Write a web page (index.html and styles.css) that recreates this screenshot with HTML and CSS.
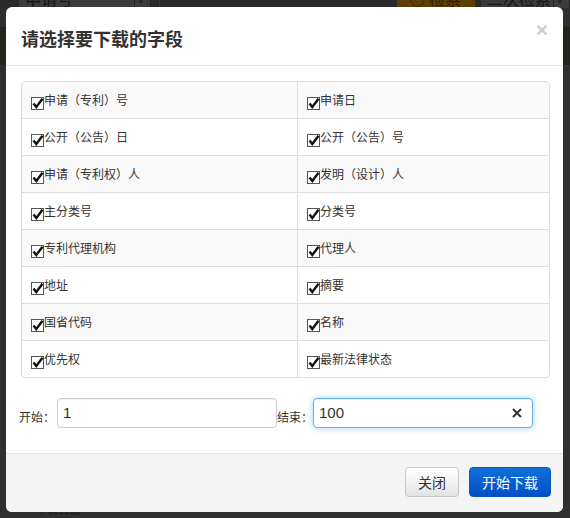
FILE: index.html
```html
<!DOCTYPE html>
<html lang="zh-CN">
<head>
<meta charset="utf-8">
<title>下载字段</title>
<link rel="stylesheet" href="styles.css">
</head>
<body>
<div class="page">
  <div class="topbar">
    <div class="sel">申请号<span class="arrow">✓</span></div>
    <div class="search-input"></div>
    <div class="search-btn">○ 检索</div>
    <div class="sel sel2">二次检索<span class="arrow">✓</span></div>
  </div>
  <div class="band"></div>
  <div class="content"><span class="frag">申请日期</span></div>
</div>

<div class="modal">
  <div class="modal-header">
    <h4 class="modal-title">请选择要下载的字段</h4>
    <span class="close">×</span>
  </div>
  <div class="modal-body">
    <div class="fields">
      <div class="cell odd"><span class="cb"><svg viewBox="0 0 13 13" width="13" height="13"><path d="M2.5 6.5 L5.3 10 L11.5 1.8" fill="none" stroke="#111" stroke-width="2.4" stroke-linejoin="miter"/></svg></span>申请（专利）号</div>
      <div class="cell odd right"><span class="cb"><svg viewBox="0 0 13 13" width="13" height="13"><path d="M2.5 6.5 L5.3 10 L11.5 1.8" fill="none" stroke="#111" stroke-width="2.4"/></svg></span>申请日</div>
      <div class="cell"><span class="cb"><svg viewBox="0 0 13 13" width="13" height="13"><path d="M2.5 6.5 L5.3 10 L11.5 1.8" fill="none" stroke="#111" stroke-width="2.4"/></svg></span>公开（公告）日</div>
      <div class="cell right"><span class="cb"><svg viewBox="0 0 13 13" width="13" height="13"><path d="M2.5 6.5 L5.3 10 L11.5 1.8" fill="none" stroke="#111" stroke-width="2.4"/></svg></span>公开（公告）号</div>
      <div class="cell odd"><span class="cb"><svg viewBox="0 0 13 13" width="13" height="13"><path d="M2.5 6.5 L5.3 10 L11.5 1.8" fill="none" stroke="#111" stroke-width="2.4"/></svg></span>申请（专利权）人</div>
      <div class="cell odd right"><span class="cb"><svg viewBox="0 0 13 13" width="13" height="13"><path d="M2.5 6.5 L5.3 10 L11.5 1.8" fill="none" stroke="#111" stroke-width="2.4"/></svg></span>发明（设计）人</div>
      <div class="cell"><span class="cb"><svg viewBox="0 0 13 13" width="13" height="13"><path d="M2.5 6.5 L5.3 10 L11.5 1.8" fill="none" stroke="#111" stroke-width="2.4"/></svg></span>主分类号</div>
      <div class="cell right"><span class="cb"><svg viewBox="0 0 13 13" width="13" height="13"><path d="M2.5 6.5 L5.3 10 L11.5 1.8" fill="none" stroke="#111" stroke-width="2.4"/></svg></span>分类号</div>
      <div class="cell odd"><span class="cb"><svg viewBox="0 0 13 13" width="13" height="13"><path d="M2.5 6.5 L5.3 10 L11.5 1.8" fill="none" stroke="#111" stroke-width="2.4"/></svg></span>专利代理机构</div>
      <div class="cell odd right"><span class="cb"><svg viewBox="0 0 13 13" width="13" height="13"><path d="M2.5 6.5 L5.3 10 L11.5 1.8" fill="none" stroke="#111" stroke-width="2.4"/></svg></span>代理人</div>
      <div class="cell"><span class="cb"><svg viewBox="0 0 13 13" width="13" height="13"><path d="M2.5 6.5 L5.3 10 L11.5 1.8" fill="none" stroke="#111" stroke-width="2.4"/></svg></span>地址</div>
      <div class="cell right"><span class="cb"><svg viewBox="0 0 13 13" width="13" height="13"><path d="M2.5 6.5 L5.3 10 L11.5 1.8" fill="none" stroke="#111" stroke-width="2.4"/></svg></span>摘要</div>
      <div class="cell odd"><span class="cb"><svg viewBox="0 0 13 13" width="13" height="13"><path d="M2.5 6.5 L5.3 10 L11.5 1.8" fill="none" stroke="#111" stroke-width="2.4"/></svg></span>国省代码</div>
      <div class="cell odd right"><span class="cb"><svg viewBox="0 0 13 13" width="13" height="13"><path d="M2.5 6.5 L5.3 10 L11.5 1.8" fill="none" stroke="#111" stroke-width="2.4"/></svg></span>名称</div>
      <div class="cell"><span class="cb"><svg viewBox="0 0 13 13" width="13" height="13"><path d="M2.5 6.5 L5.3 10 L11.5 1.8" fill="none" stroke="#111" stroke-width="2.4"/></svg></span>优先权</div>
      <div class="cell right"><span class="cb"><svg viewBox="0 0 13 13" width="13" height="13"><path d="M2.5 6.5 L5.3 10 L11.5 1.8" fill="none" stroke="#111" stroke-width="2.4"/></svg></span>最新法律状态</div>
    </div>
    <div class="range">
      <span class="lbl">开始：</span>
      <div class="inp">1</div>
      <span class="lbl">结束：</span>
      <div class="inp focus">100<span class="clear"><svg viewBox="0 0 10 10" width="10" height="10"><path d="M1 1 L9 9 M9 1 L1 9" stroke="#333" stroke-width="2"/></svg></span></div>
    </div>
  </div>
  <div class="modal-footer">
    <button class="btn btn-default">关闭</button>
    <button class="btn btn-primary">开始下载</button>
  </div>
</div>
</body>
</html>
```

FILE: styles.css
```css
* { box-sizing: border-box; }
html, body { margin: 0; padding: 0; }
body {
  width: 570px;
  height: 518px;
  overflow: hidden;
  background: #2e2e2e;
  font-family: "Noto Sans CJK SC", "Liberation Sans", sans-serif;
  position: relative;
}
.page { height: 518px; }
.topbar {
  display: flex;
  height: 20px;
  margin-top: -12px;
  background: #2a2a2a;
  font-size: 16px;
  color: #161616;
}
.sel {
  margin-left: 19px;
  width: 133px;
  background: #3b3b3b;
  padding-left: 6px;
  line-height: 20px;
  position: relative;
  display: flex;
  justify-content: space-between;
}
.sel .arrow {
  width: 17px;
  border-left: 1px solid #222;
  border-right: 1px solid #222;
  text-align: center;
  font-size: 12px;
}
.search-input {
  width: 240px;
  margin-left: 8px;
  border-left: 1px solid #3a3a3a;
}
.search-btn {
  width: 78px;
  background: #5c3f06;
  color: #2b1c02;
  padding-left: 12px;
  line-height: 20px;
}
.sel2 { margin-left: 6px; width: 90px; }
.band {
  margin-top: 19px;
  height: 38px;
  background: #25241a;
}
.content {
  height: 461px;
  background: #2f2f2f;
  position: relative;
}
.frag {
  display: block;
  padding-top: 436px;
  padding-left: 36px;
  font-size: 11px;
  color: #181818;
}

.modal {
  position: absolute;
  left: 6px;
  top: 7px;
  width: 557px;
  background: #fff;
  border-radius: 6px;
  overflow: hidden;
  color: #333;
}
.modal-header {
  height: 59px;
  border-bottom: 1px solid #e5e5e5;
  display: flex;
  align-items: center;
  justify-content: space-between;
  padding: 0 15px;
}
.modal-title {
  margin: 3px 0 0 0;
  font-size: 18px;
  font-weight: bold;
  color: #333;
  line-height: 24px;
}
.close {
  font-family: "Liberation Sans", sans-serif;
  font-size: 21px;
  font-weight: bold;
  color: #cdcdcd;
  line-height: 1;
  margin-top: -14px;
}
.modal-body {
  padding: 15px 13px 25px 15px;
}
.fields {
  display: grid;
  grid-template-columns: 275px 1fr;
  border: 1px solid #dddddd;
  border-radius: 4px;
  overflow: hidden;
}
.cell {
  height: 37px;
  border-top: 1px solid #dddddd;
  display: flex;
  align-items: flex-start;
  padding: 8px 9px 0 9px;
  font-size: 12px;
  line-height: 20px;
  color: #333;
  white-space: nowrap;
}
.cell:nth-child(-n+2) { height: 36px; border-top: 0; padding-top: 8px; }
.cell.right { border-left: 1px solid #dddddd; }
.cell.odd { background: #f9f9f9; }
.cb {
  width: 13px;
  height: 13px;
  margin-top: 7px;
  border: 1px solid #555;
  background: #fff;
  position: relative;
  flex: none;
  margin-right: 0;
}
.cb svg {
  position: absolute;
  left: -1px;
  top: -1px;
}
.range {
  display: flex;
  align-items: flex-end;
  margin-top: 20px;
  margin-left: -2px;
}
.lbl {
  font-size: 12px;
  line-height: 20px;
  color: #333;
  margin-bottom: 1px;
  white-space: nowrap;
}
.lbl:first-child { margin-right: 2px; }
.inp {
  width: 220px;
  height: 30px;
  border: 1px solid #cccccc;
  border-radius: 4px;
  font-family: "Liberation Sans", sans-serif;
  font-size: 15px;
  line-height: 28px;
  padding: 0 5px;
  color: #333;
  position: relative;
  box-shadow: inset 0 1px 1px rgba(0,0,0,0.06);
}
.inp.focus {
  border-color: #66afe9;
  box-shadow: inset 0 1px 1px rgba(0,0,0,0.075), 0 0 6px rgba(102,175,233,0.6);
}
.clear {
  position: absolute;
  right: 10px;
  top: 9px;
  width: 10px;
  height: 10px;
  display: block;
}
.clear svg { display: block; }
.modal-footer {
  border-top: 1px solid #e5e5e5;
  background: #f4f4f4;
  padding: 13px 12px 15px 15px;
  display: flex;
  justify-content: flex-end;
  gap: 10px;
}
.btn {
  height: 30px;
  padding: 0 12px;
  font-family: "Noto Sans CJK SC", sans-serif;
  font-size: 14px;
  line-height: 28px;
  border-radius: 4px;
  cursor: pointer;
}
.btn-default {
  background: linear-gradient(#ffffff, #e4e4e4);
  border: 1px solid #c8c8c8;
  color: #333;
}
.btn-primary {
  background: linear-gradient(#1170d9, #004fc5);
  border: 1px solid #0a55b8;
  color: #fff;
}
```
